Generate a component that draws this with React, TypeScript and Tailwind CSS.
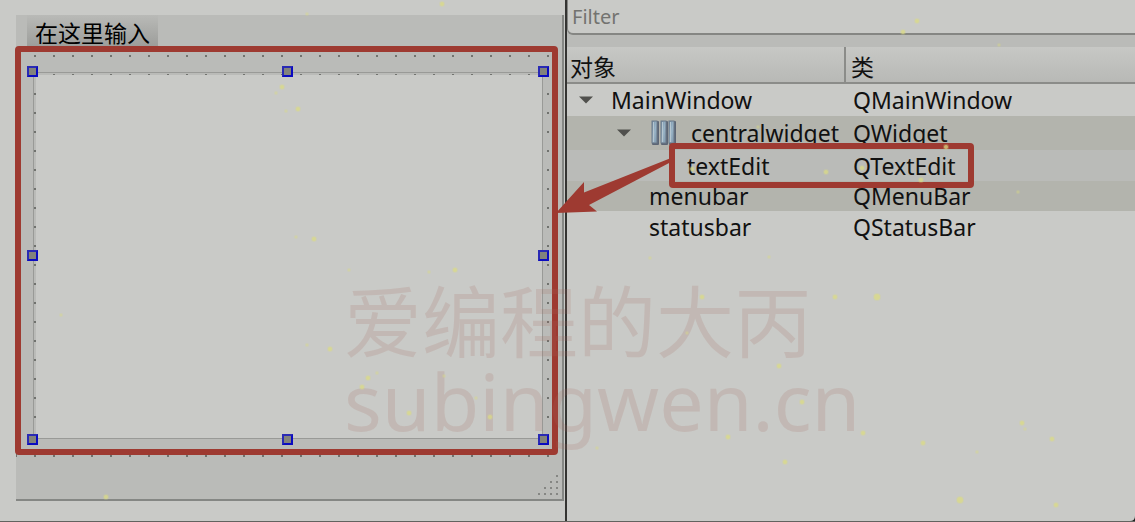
import React from "react";

const sparks: [number, number, number][] = [
  [276, 93, 1], [282, 87, 2], [286, 111, 1], [298, 109, 2], [442, 4, 2], [307, 14, 1],
  [903, 32, 2], [917, 21, 2], [999, 45, 1], [826, 172, 2], [862, 168, 2], [921, 180, 2],
  [946, 147, 2], [1018, 192, 1], [692, 169, 2], [758, 127, 1], [296, 237, 1], [314, 239, 2],
  [349, 270, 1], [429, 272, 1], [455, 270, 2], [330, 349, 2], [307, 345, 1], [362, 387, 2],
  [368, 378, 2], [377, 373, 1], [444, 376, 1], [476, 398, 1], [409, 413, 2], [490, 417, 2],
  [61, 315, 1], [106, 497, 2], [702, 297, 2], [687, 333, 1], [835, 297, 2], [877, 297, 3],
  [779, 366, 2], [802, 402, 2], [728, 437, 2], [863, 433, 2], [923, 443, 2], [977, 452, 1],
  [1022, 423, 2], [1025, 429, 1], [1052, 439, 2], [960, 500, 3], [1056, 505, 2],
  [785, 462, 2], [650, 258, 1], [769, 257, 1], [597, 448, 1],
];

function Handle({ place }: { place: string }) {
  return (
    <span
      className={`absolute size-[11px] border-2 border-[#0b0bc0] border-t-[#2a2ab4] border-l-[#2a2ab4] bg-[#82827c] ${place}`}
    />
  );
}

function Expander({ label }: { label: string }) {
  return (
    <button type="button" aria-label={label} className="h-2 w-[14px] shrink-0">
      <svg viewBox="0 0 14 8" className="block h-2 w-[14px]">
        <path d="M0 0.5H14L7 7.5Z" fill="#50504d" />
      </svg>
    </button>
  );
}

function LayoutIcon() {
  return (
    <svg viewBox="0 0 26 26" className="h-[26px] w-[26px] shrink-0">
      <defs>
        <linearGradient id="bar" x1="0" y1="0" x2="1" y2="1">
          <stop offset="0" stopColor="#718da4" />
          <stop offset="0.5" stopColor="#9ab4c6" />
          <stop offset="1" stopColor="#7d96aa" />
        </linearGradient>
      </defs>
      {[1, 10, 18].map((x) => (
        <g key={x}>
          <rect x={x} y="1" width="7" height="24" rx="1" fill="#5d6675" />
          <rect x={x} y="1" width="5" height="22" fill="url(#bar)" stroke="#6c7b8a" strokeWidth="1" />
          <path d={`M${x + 1.5} 2V22`} stroke="#b5c6d0" strokeWidth="1" />
        </g>
      ))}
    </svg>
  );
}

function Row({ className, indent, name, type, children }: {
  className: string;
  indent: string;
  name: string;
  type: string;
  children?: React.ReactNode;
}) {
  return (
    <tr className={className}>
      <td className="p-0">
        <div className={`flex items-center whitespace-nowrap ${indent}`}>
          {children}
          <span>{name}</span>
        </div>
      </td>
      <td className="p-0 pl-[7px]">{type}</td>
    </tr>
  );
}

function FormPreview() {
  return (
    <section className="flex flex-col border-r-2 border-[#343432] pt-[15px] pr-px pb-5 pl-4">
      <div className="flex grow flex-col border-r-2 border-b-2 border-[#858784] bg-[#babbb8]">
        <div className="flex h-[31px] pl-[11px]">
          <button
            type="button"
            className="bg-linear-to-b from-[#b9bab7] to-[#9d9e9b] px-2 pt-1 text-[23px] leading-7 text-black"
          >
            在这里输入
          </button>
        </div>
        <div className="relative mr-1 flex grow bg-[radial-gradient(circle_at_1px_1px,#70726e_1px,transparent_1.5px)] bg-size-[19px_19px] bg-position-[-1px_9px] pt-[26px] pr-[15px] pb-4 pl-[17px]">
          <div className="relative flex grow border border-[#999a97] pt-[2px] pl-[2px]">
            <textarea aria-label="textEdit" className="block grow resize-none bg-[#c9cac7] outline-none" />
            <Handle place="-left-[7px] -top-[7px]" />
            <Handle place="left-1/2 -ml-[6px] -top-[7px]" />
            <Handle place="-right-[7px] -top-[7px]" />
            <Handle place="-left-[7px] top-1/2 -mt-[6px]" />
            <Handle place="-right-[7px] top-1/2 -mt-[6px]" />
            <Handle place="-left-[7px] -bottom-[7px]" />
            <Handle place="left-1/2 -ml-[6px] -bottom-[7px]" />
            <Handle place="-right-[7px] -bottom-[7px]" />
          </div>
          <div className="pointer-events-none absolute inset-y-0 -left-px right-0 rounded-sm border-[6px] border-[#9e3a31]" />
        </div>
        <div className="flex h-11 items-end justify-end bg-[radial-gradient(circle_at_1px_1px,#70726e_1px,transparent_1.5px)] bg-size-[19px_19px] bg-position-[-1px_0px] bg-repeat-x pr-1 pb-1">
          <svg viewBox="0 0 20 20" className="size-5" fill="#858683">
            {[0, 1, 2, 3].flatMap((r) =>
              Array.from({ length: r + 1 }, (_, c) => (
                <rect key={`${r}-${c}`} x={18 - c * 6} y={r * 6} width="2" height="2" />
              )),
            )}
          </svg>
        </div>
      </div>
    </section>
  );
}

function ObjectInspector() {
  return (
    <section className="min-w-0">
      <div className="bg-[#babbb8] pb-3">
        <input
          aria-label="Filter"
          placeholder="Filter"
          className="block h-[35px] w-full rounded-bl-md border-b-2 border-l border-[#858683] bg-[#c9cac7] px-1 text-xl outline-none placeholder:text-[#737370]"
        />
      </div>
      <div className="relative">
        <table className="w-full table-fixed border-separate border-spacing-0 text-left text-[23px] leading-7 text-[#111111]">
          <colgroup>
            <col className="w-[279px]" />
            <col />
          </colgroup>
          <thead>
            <tr className="h-[37px] bg-linear-to-b from-[#c7c8c5] to-[#b7b8b5]">
              <th className="border-r-2 border-b-2 border-[#8b8c89] p-0 pt-1 pl-[3px] font-normal">对象</th>
              <th className="border-b-2 border-[#8b8c89] p-0 pt-1 pl-[5px] font-normal">类</th>
            </tr>
          </thead>
          <tbody>
            <Row className="h-8" indent="gap-[18px] pl-3" name="MainWindow" type="QMainWindow">
              <Expander label="MainWindow" />
            </Row>
            <Row className="h-[34px] bg-[#b3b4ad]" indent="pl-[50px]" name="centralwidget" type="QWidget">
              <Expander label="centralwidget" />
              <span className="mr-[14px] ml-5"><LayoutIcon /></span>
            </Row>
            <Row className="h-[31px] bg-[#babbb8]" indent="pl-[120px]" name="textEdit" type="QTextEdit" />
            <Row className="h-[30px] bg-[#b3b4ad]" indent="pl-[82px]" name="menubar" type="QMenuBar" />
            <Row className="h-[31px]" indent="pl-[82px]" name="statusbar" type="QStatusBar" />
          </tbody>
        </table>
        <div className="pointer-events-none absolute top-24 left-[102px] h-[45px] w-[305px] rounded-sm border-[6px] border-[#9e3a31]" />
        <svg
          viewBox="0 0 116 60"
          className="pointer-events-none absolute top-[108px] -left-[11px] h-[60px] w-[116px]"
          aria-hidden="true"
        >
          <path d="M115 3L28 37.5V27L0 58L41 56.5L33 50L115 7Z" fill="#9e3a31" />
        </svg>
      </div>
    </section>
  );
}

export default function App() {
  return (
    <main className="relative grid min-h-screen grid-cols-[567fr_568fr] overflow-hidden border-b border-[#62635f] bg-[#c9cac7] font-['Noto_Sans','Noto_Sans_CJK_SC',sans-serif]">
      <FormPreview />
      <ObjectInspector />
      <div className="pointer-events-none absolute top-[282px] left-[344px] whitespace-nowrap text-[#a86c60]/18">
        <p className="text-[78px] leading-[80px]">爱编程的大丙</p>
        <p className="text-[79px] leading-[78px]">subingwen.cn</p>
      </div>
      <svg className="pointer-events-none absolute inset-0 size-full" aria-hidden="true">
        {sparks.map(([x, y, r]) => (
          <g key={`${x}-${y}`} fill="#dcdc82">
            <circle cx={x} cy={y} r={r + 1} opacity="0.25" />
            <circle cx={x} cy={y} r={r} opacity={r > 1 ? 0.65 : 0.3} />
          </g>
        ))}
      </svg>
      <svg viewBox="0 0 5 5" className="absolute right-0 bottom-0 size-[5px]" aria-hidden="true">
        <path d="M5 0V5H0Q5 5 5 0Z" fill="#222222" />
      </svg>
    </main>
  );
}
